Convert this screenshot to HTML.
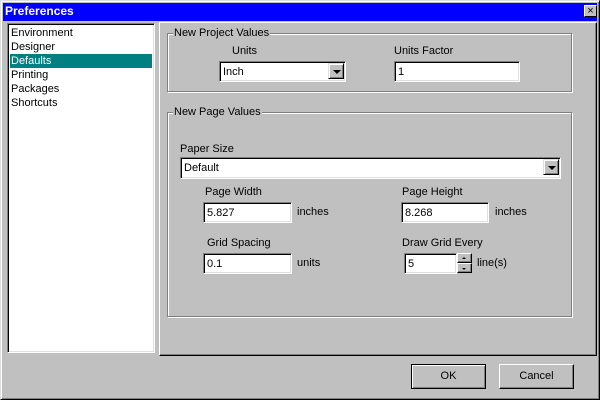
<!DOCTYPE html><html><head><style>
*{margin:0;padding:0;box-sizing:border-box}
body{width:600px;height:400px;background:#c0c0c0;font-family:"Liberation Sans",Arial,sans-serif;font-size:11px;position:relative;overflow:hidden}
.a{position:absolute}
.win{left:0;top:0;width:600px;height:400px;border:1px solid;border-color:#dfdfdf #000 #000 #dfdfdf;box-shadow:inset 1px 1px #fff,inset -1px -1px #808080}
.title{left:3px;top:3px;width:594px;height:18px;background:#0000ff;color:#fff;font-weight:bold;font-size:12px;line-height:17px;padding-left:2px}
.sunk{border:1px solid;border-color:#808080 #fff #fff #808080;box-shadow:inset 1px 1px #000,inset -1px -1px #dfdfdf;background:#fff}
.raise{border:1px solid;border-color:#fff #000 #000 #fff;box-shadow:inset -1px -1px #808080}
.grp{border:1px solid #808080;box-shadow:1px 1px #fff,inset 1px 1px #fff}
.lg{background:#c0c0c0;padding:0 1px;top:-7px;left:5px}
.inp{padding:4px 0 0 3px;font-size:11px}
.btn{background:#c0c0c0;text-align:center;line-height:22px}
.arr{width:16px;height:16px;top:1px;right:1px;background:#c0c0c0;border:1px solid;border-color:#dfdfdf #000 #000 #dfdfdf;box-shadow:inset 1px 1px #fff,inset -1px -1px #808080}
.arr:after{content:"";position:absolute;left:4px;top:6px;border:3px solid transparent;border-top:4px solid #000;border-left-width:4px;border-right-width:4px;border-bottom:0}
</style></head><body>
<div class="a win"></div>
<div class="a title">Preferences</div>
<div class="a btn" style="left:584px;top:5px;width:13px;height:12px;border:1px solid;border-color:#fff #000 #000 #fff;line-height:10px;font-size:11px;color:#000">×</div>

<div class="a sunk" style="left:7px;top:23px;width:148px;height:330px;padding:2px">
<div style="line-height:14px;padding-left:1px">Environment</div>
<div style="line-height:14px;padding-left:1px">Designer</div>
<div style="line-height:14px;padding-left:1px;background:#008080;color:#fff">Defaults</div>
<div style="line-height:14px;padding-left:1px">Printing</div>
<div style="line-height:14px;padding-left:1px">Packages</div>
<div style="line-height:14px;padding-left:1px">Shortcuts</div>
</div>

<div class="a raise" style="left:159px;top:22px;width:438px;height:334px"></div>

<div class="a grp" style="left:167px;top:33px;width:405px;height:59px"><div class="a lg">New Project Values</div></div>
<div class="a" style="left:232px;top:45px">Units</div>
<div class="a sunk inp" style="left:219px;top:61px;width:127px;height:21px">Inch<div class="a arr"></div></div>
<div class="a" style="left:394px;top:45px">Units Factor</div>
<div class="a sunk inp" style="left:394px;top:61px;width:126px;height:21px">1</div>

<div class="a grp" style="left:167px;top:112px;width:405px;height:205px"><div class="a lg">New Page Values</div></div>
<div class="a" style="left:180px;top:143px">Paper Size</div>
<div class="a sunk inp" style="left:180px;top:157px;width:381px;height:22px">Default<div class="a arr"></div></div>
<div class="a" style="left:205px;top:186px">Page Width</div>
<div class="a sunk inp" style="left:203px;top:202px;width:89px;height:21px">5.827</div>
<div class="a" style="left:297px;top:206px">inches</div>
<div class="a" style="left:402px;top:186px">Page Height</div>
<div class="a sunk inp" style="left:401px;top:202px;width:88px;height:21px">8.268</div>
<div class="a" style="left:495px;top:206px">inches</div>
<div class="a" style="left:207px;top:237px">Grid Spacing</div>
<div class="a sunk inp" style="left:203px;top:253px;width:89px;height:21px">0.1</div>
<div class="a" style="left:297px;top:257px">units</div>
<div class="a" style="left:402px;top:237px">Draw Grid Every</div>
<div class="a sunk inp" style="left:404px;top:253px;width:53px;height:21px">5</div>
<div class="a raise" style="left:457px;top:253px;width:15px;height:10px;background:#c0c0c0"><div class="a" style="left:4px;top:3px;border:2px solid transparent;border-bottom:2px solid #000;border-top:0"></div></div>
<div class="a raise" style="left:457px;top:263px;width:15px;height:10px;background:#c0c0c0"><div class="a" style="left:4px;top:4px;border:2px solid transparent;border-top:2px solid #000;border-bottom:0"></div></div>
<div class="a" style="left:477px;top:257px">line(s)</div>

<div class="a btn" style="left:411px;top:364px;width:75px;height:25px;border:1px solid #000;box-shadow:inset 1px 1px #fff,inset -1px -1px #808080">OK</div>
<div class="a btn raise" style="left:499px;top:364px;width:75px;height:25px;border-color:#fff #000 #000 #fff">Cancel</div>
</body></html>
